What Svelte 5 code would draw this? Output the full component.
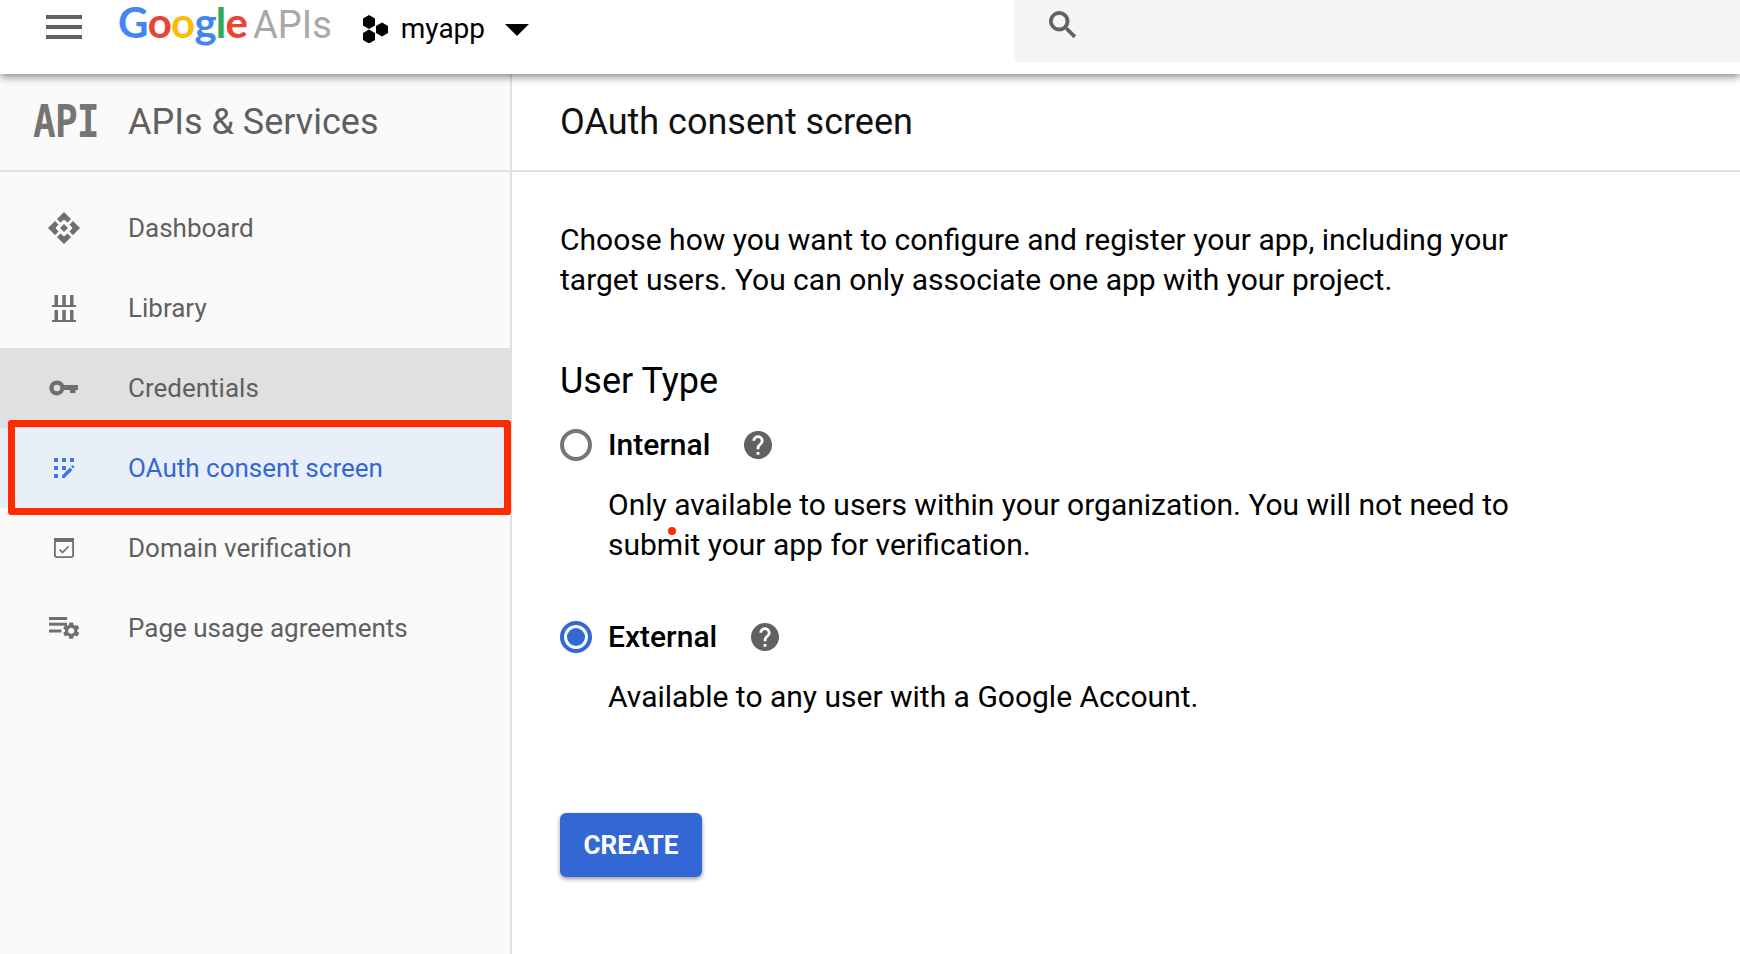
<script lang="ts">
	const helpPath =
		'M12 2C6.48 2 2 6.48 2 12s4.48 10 10 10 10-4.48 10-10S17.52 2 12 2zm1 17h-2v-2h2v2zm2.07-7.75l-.9.92C13.45 12.9 13 13.5 13 15h-2v-.5c0-1.1.45-2.1 1.17-2.83l1.24-1.26c.37-.36.59-.86.59-1.41 0-1.1-.9-2-2-2s-2 .9-2 2H8c0-2.21 1.79-4 4-4s4 1.79 4 4c0 .88-.36 1.68-.93 2.25z';

	const navItems = [
		{ id: 'dashboard', label: 'Dashboard' },
		{ id: 'library', label: 'Library' },
		{ id: 'credentials', label: 'Credentials' },
		{ id: 'oauth', label: 'OAuth consent screen' },
		{ id: 'domain', label: 'Domain verification' },
		{ id: 'usage', label: 'Page usage agreements' }
	];

	let userType = $state('external');
</script>

<div class="page">
	<header class="topbar">
		<button class="menu-btn" aria-label="Main menu">
			<span></span><span></span><span></span>
		</button>
		<div class="logo">
			<span class="b">G</span><span class="r">o</span><span class="y">o</span><span class="b">g</span><span class="g">l</span><span class="r">e</span>
			<span class="apis">APIs</span>
		</div>
		<div class="project">
			<svg class="hex" viewBox="0 0 28 28" fill="#000">
				<polygon points="7,0 13,3.5 13,10.5 7,14 1,10.5 1,3.5" />
				<polygon points="7,14.5 13,18 13,25 7,28.5 1,25 1,18" />
				<polygon points="20,7.5 26,11 26,18 20,21.5 14,18 14,11" />
			</svg>
			<span class="project-name">myapp</span>
			<svg class="caret" viewBox="0 0 24 12" fill="#000"><polygon points="0,0 24,0 12,12" /></svg>
		</div>
		<div class="search">
			<svg viewBox="0 0 24 24" fill="#616161" stroke="#616161" stroke-width=".6">
				<path d="M15.5 14h-.79l-.28-.27C15.41 12.59 16 11.11 16 9.5 16 5.91 13.09 3 9.5 3S3 5.91 3 9.5 5.91 16 9.5 16c1.61 0 3.09-.59 4.23-1.57l.27.28v.79l5 4.99L20.49 19l-4.99-5zm-6 0C7.01 14 5 11.99 5 9.5S7.01 5 9.5 5 14 7.01 14 9.5 11.99 14 9.5 14z" />
			</svg>
		</div>
	</header>

	<div class="layout">
		<aside class="sidebar">
			<div class="side-head">
				<span class="api-cell"><span class="api-mark">API</span></span>
				<span class="side-title">APIs &amp; Services</span>
			</div>
			<nav>
				{#each navItems as item}
					<a
						href="#{item.id}"
						class="nav-item"
						class:selected={item.id === 'credentials'}
						class:current={item.id === 'oauth'}
					>
						<span class="nav-icon">
							{#if item.id === 'dashboard'}
								<svg viewBox="0 0 32 32" fill="currentColor">
									<polygon points="16,0 23,7 19.500,10.500 16,7.500 12.500,10.500 9,7" />
									<polygon points="16,32 23,25 19.500,21.500 16,24.500 12.500,21.500 9,25" />
									<polygon points="0,16 7,9 10.500,12.500 7.500,16 10.500,19.500 7,23" />
									<polygon points="32,16 25,9 21.500,12.500 24.500,16 21.500,19.500 25,23" />
									<polygon points="16,12 20,16 16,20 12,16" />
								</svg>
							{:else if item.id === 'library'}
								<svg viewBox="0 0 32 32" fill="currentColor">
									<rect x="6.500" y="3" width="3.500" height="10" /><rect x="14.300" y="3" width="3.500" height="10" /><rect x="22" y="3" width="3.500" height="10" />
									<rect x="4" y="13" width="24" height="2" />
									<rect x="6.500" y="18" width="3.500" height="10" /><rect x="14.300" y="18" width="3.500" height="10" /><rect x="22" y="18" width="3.500" height="10" />
									<rect x="4" y="28" width="24" height="2" />
								</svg>
							{:else if item.id === 'credentials'}
								<svg viewBox="0 0 32 32" fill="currentColor">
									<path d="M9 8.500a7.500 7.500 0 0 1 7 4.500H30v5h-2.500v3H22v-3h-6a7.500 7.500 0 1 1-7-9.500zm0 4.200a3.300 3.300 0 1 0 0 6.600 3.300 3.300 0 0 0 0-6.600z" />
								</svg>
							{:else if item.id === 'oauth'}
								<svg viewBox="-6 -6 32 32" fill="currentColor">
									<rect width="4" height="4" /><rect x="8" width="4" height="4" /><rect x="16" width="4" height="4" />
									<rect y="8" width="4" height="4" /><rect x="8" y="8" width="4" height="4" />
									<rect y="16" width="4" height="4" />
									<polygon points="8,20 8,17.500 16,9.500 18.500,12 10.500,20" />
									<polygon points="17,8.500 18.500,7 20.500,9 19,10.500" />
								</svg>
							{:else if item.id === 'domain'}
								<svg viewBox="-6 -6 32 32" fill="none" stroke="currentColor">
									<rect x=".9" y=".9" width="18.200" height="18.200" rx="1.500" stroke-width="1.800" />
									<rect x="0" y="0" width="20" height="4" fill="currentColor" stroke="none" />
									<path d="M5.500 11.500l3 3 6-6" stroke-width="1.700" />
								</svg>
							{:else}
								<svg viewBox="0 0 32 32" fill="currentColor">
									<rect x="1" y="5" width="18" height="3" /><rect x="1" y="10.700" width="18" height="3" /><rect x="1" y="17.500" width="12.500" height="3" />
									<g transform="translate(13 8.500) scale(.85)">
										<path d="M19.140 12.940c.04-.3.06-.61.06-.94 0-.32-.02-.64-.07-.94l2.030-1.580c.18-.14.23-.41.12-.61l-1.920-3.320c-.12-.22-.37-.29-.59-.22l-2.390.96c-.5-.38-1.030-.7-1.620-.94l-.36-2.540c-.04-.24-.24-.41-.48-.41h-3.840c-.24 0-.43.17-.47.41l-.36 2.540c-.59.24-1.130.57-1.620.94l-2.390-.96c-.22-.08-.47 0-.59.22L2.740 8.870c-.12.21-.08.47.12.61l2.030 1.580c-.05.3-.09.63-.09.94s.02.64.07.94l-2.030 1.580c-.18.14-.23.41-.12.61l1.920 3.320c.12.22.37.29.59.22l2.390-.96c.5.38 1.030.7 1.620.94l.36 2.540c.05.24.24.41.48.41h3.840c.24 0 .44-.17.47-.41l.36-2.540c.59-.24 1.130-.56 1.620-.94l2.390.96c.22.08.47 0 .59-.22l1.920-3.320c.12-.22.07-.47-.12-.61l-2.010-1.580zM12 15.600c-1.980 0-3.600-1.620-3.600-3.600s1.620-3.600 3.600-3.600 3.600 1.620 3.600 3.600-1.620 3.600-3.600 3.600z" />
									</g>
								</svg>
							{/if}
						</span>
						<span>{item.label}</span>
					</a>
				{/each}
			</nav>
			<div class="callout"></div>
		</aside>

		<main class="content">
			<div class="content-head"><h1>OAuth consent screen</h1></div>
			<div class="content-body">
				<p class="intro">
					Choose how you want to configure and register your app, including your<br />target users. You can only associate one app with your project.
				</p>
				<h2>User Type</h2>

				<label class="option option-first">
					<input type="radio" name="usertype" value="internal" bind:group={userType} />
					<span class="radio"></span>
					<b>Internal</b>
					<svg class="help" viewBox="2 2 20 20" fill="#616161"><path d={helpPath} /></svg>
				</label>
				<p class="option-desc">
					Only available to users within your organization. You will not need to<br />submit your app for verification.
					<span class="dot"></span>
				</p>

				<label class="option option-second">
					<input type="radio" name="usertype" value="external" bind:group={userType} />
					<span class="radio"></span>
					<b>External</b>
					<svg class="help" viewBox="2 2 20 20" fill="#616161"><path d={helpPath} /></svg>
				</label>
				<p class="option-desc">Available to any user with a Google Account.</p>

				<button class="create">CREATE</button>
			</div>
		</main>
	</div>
</div>

<style>
	:global(body) {
		margin: 0;
		font-family: Roboto, Arial, sans-serif;
		background: #fff;
	}

	.page {
		height: 954px;
		display: flex;
		flex-direction: column;
		overflow: hidden;
	}

	.topbar {
		height: 74px;
		flex-shrink: 0;
		display: flex;
		align-items: flex-start;
		background: #fff;
		position: relative;
		z-index: 2;
		box-shadow: 0 3px 8px rgba(0, 0, 0, 0.45);
	}

	.menu-btn {
		width: 36px;
		margin: 15px 0 0 46px;
		padding: 0;
		border: none;
		background: none;
		display: flex;
		flex-direction: column;
		gap: 6px;
	}

	.menu-btn span {
		height: 4px;
		background: #616161;
	}

	.logo {
		display: flex;
		align-items: baseline;
		margin: 0 0 0 36px;
		font-family: Lato, Roboto, sans-serif;
		font-size: 42px;
		font-weight: 700;
		letter-spacing: -0.8px;
		white-space: nowrap;
		line-height: 44px;
	}

	.b { color: #4285f4; }
	.r { color: #ea4335; }
	.y { color: #fbbc05; }
	.g { color: #34a853; }

	.apis {
		color: #a8a8a8;
		font-family: Roboto, sans-serif;
		font-size: 38px;
		font-weight: 400;
		letter-spacing: 0;
		margin-left: 6px;
	}

	.project {
		display: flex;
		align-items: center;
		margin: 12px 0 0 30px;
	}

	.hex {
		width: 28px;
		height: 28px;
	}

	.project-name {
		margin-left: 11px;
		font-size: 28px;
		color: #000;
	}

	.caret {
		width: 24px;
		height: 12px;
		margin: 3px 0 0 20px;
	}

	.search {
		position: absolute;
		left: 1014px;
		right: 0;
		top: 0;
		height: 62px;
		background: #f5f5f5;
		display: flex;
		align-items: flex-start;
		padding: 7px 0 0 31px;
		box-sizing: border-box;
	}

	.search svg {
		width: 36px;
		height: 36px;
	}

	.layout {
		flex: 1;
		display: flex;
		min-height: 0;
	}

	.sidebar {
		position: relative;
		width: 510px;
		flex-shrink: 0;
		background: #fafafa;
		border-right: 2px solid #e0e0e0;
	}

	.side-head {
		height: 96px;
		display: flex;
		align-items: center;
		border-bottom: 2px solid #e0e0e0;
	}

	.api-cell {
		width: 128px;
		flex-shrink: 0;
		padding-left: 33px;
		box-sizing: border-box;
	}

	.api-mark {
		display: inline-block;
		font-family: 'DejaVu Sans Mono', monospace;
		font-weight: 700;
		font-size: 44px;
		line-height: 42px;
		letter-spacing: -1px;
		color: #757575;
		transform: scaleX(0.86);
		transform-origin: left center;
	}

	.side-title {
		font-size: 36px;
		color: #5f5f5f;
	}

	nav {
		padding-top: 16px;
	}

	.nav-item {
		height: 80px;
		display: flex;
		align-items: center;
		font-size: 26px;
		color: #5f5f5f;
		text-decoration: none;
	}

	.nav-item.selected {
		background: #e0e0e0;
	}

	.nav-item.current {
		background: #e9eff9;
		color: #3367d6;
	}

	.nav-icon {
		width: 128px;
		flex-shrink: 0;
		display: flex;
		justify-content: center;
		color: #6f6f6f;
	}

	.current .nav-icon {
		color: #3f78e0;
	}

	.nav-icon svg {
		width: 32px;
		height: 32px;
	}

	.callout {
		position: absolute;
		left: 8px;
		top: 346px;
		width: 503px;
		height: 95px;
		box-sizing: border-box;
		border: 7px solid #ff2a00;
		border-radius: 3px;
		pointer-events: none;
	}

	.content {
		flex: 1;
		min-width: 0;
		color: #000;
	}

	.content-head {
		height: 96px;
		display: flex;
		align-items: center;
		padding-left: 48px;
		border-bottom: 2px solid #e0e0e0;
	}

	h1 {
		margin: 0;
		font-size: 36px;
		font-weight: 400;
		color: #111;
	}

	.content-body {
		padding: 48px 0 0 48px;
		font-size: 30px;
		line-height: 40px;
	}

	.intro {
		margin: 0;
	}

	h2 {
		margin: 51px 0 0;
		font-size: 36px;
		font-weight: 400;
		line-height: 60px;
	}

	.option {
		display: flex;
		align-items: center;
		height: 40px;
	}

	.option-first {
		margin-top: 14px;
	}

	.option-second {
		margin-top: 52px;
	}

	.option input {
		position: absolute;
		opacity: 0;
		width: 0;
		height: 0;
	}

	.radio {
		width: 32px;
		height: 32px;
		box-sizing: border-box;
		border: 4px solid #757575;
		border-radius: 50%;
		margin-right: 16px;
		position: relative;
	}

	input:checked + .radio {
		border-color: #3367d6;
	}

	input:checked + .radio::after {
		content: '';
		position: absolute;
		inset: 3px;
		border-radius: 50%;
		background: #3367d6;
	}

	.option b {
		font-weight: 500;
	}

	.help {
		width: 28px;
		height: 28px;
		margin-left: 34px;
	}

	.option-desc {
		position: relative;
		margin: 20px 0 0 48px;
	}

	.dot {
		position: absolute;
		left: 60px;
		top: 42px;
		width: 8px;
		height: 8px;
		border-radius: 50%;
		background: #ff2a00;
	}

	.create {
		display: block;
		margin-top: 96px;
		width: 142px;
		height: 64px;
		border: none;
		border-radius: 6px;
		background: #3367d6;
		color: #fff;
		font-family: Roboto, sans-serif;
		font-size: 26px;
		font-weight: 700;
		box-shadow: 0 2px 4px rgba(0, 0, 0, 0.4);
	}
</style>
